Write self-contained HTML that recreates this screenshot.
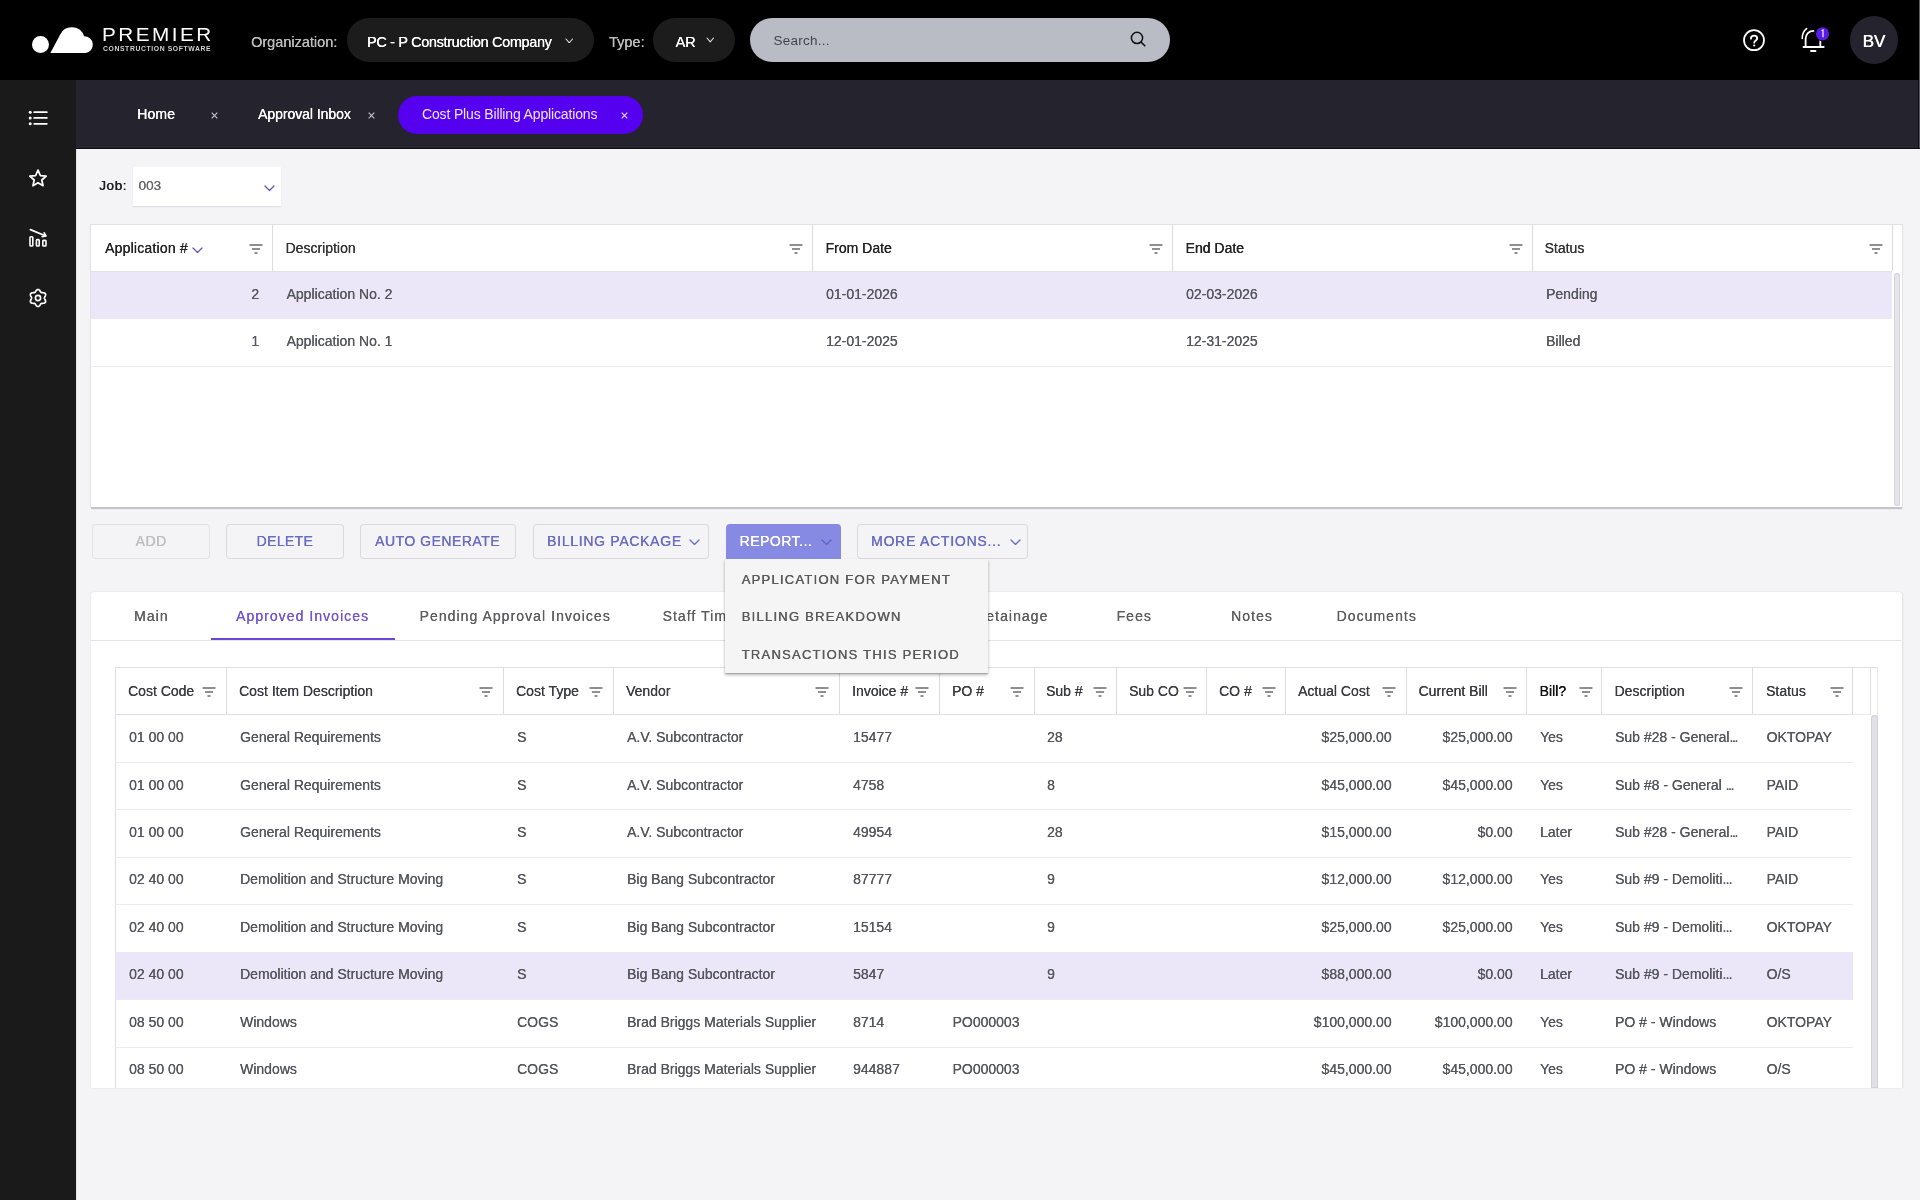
<!DOCTYPE html><html><head><meta charset="utf-8"><style>
html,body{margin:0;padding:0;width:1920px;height:1200px;overflow:hidden;background:#f4f4f7;font-family:"Liberation Sans",sans-serif;}
#wrap{position:absolute;left:0;top:0;width:1920px;height:1200px;will-change:transform;}
.t{position:absolute;white-space:pre;}
.r{position:absolute;}
.d{text-shadow:0.2px 0 0 currentColor;}
</style></head><body><div id="wrap">
<div class="r" style="left:0px;top:0px;width:1920px;height:80px;background:#000;"></div>
<svg class="r" style="left:28px;top:22px" width="70" height="36" viewBox="28 22 70 36"><circle cx="40.5" cy="44.5" r="8.5" fill="#fff"/><path d="M50.4 53.1 L60.2 34.4 A12.9 12.9 0 0 1 84.1 36.2 A8.5 8.5 0 0 1 85.6 53.1 Z" fill="#fff"/></svg>
<div class="t" style="left:101.5px;top:26.06px;font-size:18px;line-height:18px;color:#fff;letter-spacing:2.15px;transform:scaleX(1.15);transform-origin:0 0;">PREMIER</div>
<div class="t" style="left:103px;top:46.14px;font-size:6.8px;line-height:6.8px;color:#d2d2d2;font-weight:700;letter-spacing:0.62px;">CONSTRUCTION SOFTWARE</div>
<div class="t" style="left:251px;top:34.83px;font-size:14.5px;line-height:14.5px;color:#bdbdbd;text-shadow:0.2px 0 0 #bdbdbd;">Organization:</div>
<div class="r" style="left:347px;top:18px;width:247px;height:44px;background:#1c1c1c;border-radius:22px;"></div>
<div class="t" style="left:367px;top:34.83px;font-size:14.5px;line-height:14.5px;color:#fff;letter-spacing:-0.35px;text-shadow:0.15px 0 0 #fff;">PC - P Construction Company</div>
<svg class="r" style="left:565px;top:37.5px" width="8.5" height="5.8" viewBox="0 0 8.5 5.8"><path d="M1 1L4.25 4.8L7.5 1" stroke="#e0e0e0" stroke-width="1.1" fill="none" stroke-linecap="round" stroke-linejoin="round"/></svg>
<div class="t" style="left:609px;top:34.83px;font-size:14.5px;line-height:14.5px;color:#bdbdbd;text-shadow:0.2px 0 0 #bdbdbd;">Type:</div>
<div class="r" style="left:653px;top:18px;width:82px;height:44px;background:#1c1c1c;border-radius:22px;"></div>
<div class="t" style="left:675.5px;top:34.83px;font-size:14.5px;line-height:14.5px;color:#fff;text-shadow:0.15px 0 0 #fff;">AR</div>
<svg class="r" style="left:705.5px;top:37.3px" width="8.5" height="5.8" viewBox="0 0 8.5 5.8"><path d="M1 1L4.25 4.8L7.5 1" stroke="#e0e0e0" stroke-width="1.1" fill="none" stroke-linecap="round" stroke-linejoin="round"/></svg>
<div class="r" style="left:750px;top:18px;width:420px;height:44px;background:#b9bbc5;border-radius:22px;"></div>
<div class="t" style="left:773.5px;top:33.57px;font-size:13.5px;line-height:13.5px;color:#43454f;letter-spacing:0.25px;">Search...</div>
<svg class="r" style="left:1128px;top:29px" width="20" height="20" viewBox="1128 29 20 20"><circle cx="1137" cy="37.9" r="5.6" stroke="#111" stroke-width="1.5" fill="none"/><path d="M1141 42 L1144.8 45.8" stroke="#111" stroke-width="1.6" stroke-linecap="round"/></svg>
<svg class="r" style="left:1740px;top:26px" width="28" height="28" viewBox="1740 26 28 28"><circle cx="1754" cy="40.2" r="10" stroke="#fff" stroke-width="1.8" fill="none"/><path d="M1750.9 38.7 C1750.9 36.7 1752.4 35.7 1754.1 35.7 C1755.9 35.7 1757.2 36.8 1757.2 38.4 C1757.2 40.4 1754.2 40.5 1754.2 42.7" stroke="#fff" stroke-width="1.8" fill="none" stroke-linecap="round"/><circle cx="1754.2" cy="45.5" r="1.1" fill="#fff"/></svg>
<svg class="r" style="left:1796px;top:22px" width="40" height="34" viewBox="1796 22 40 34"><path d="M1805.6 47 L1805.6 39 C1805.6 34 1809 30.9 1813.5 30.9" stroke="#fff" stroke-width="1.8" fill="none" stroke-linecap="round"/><path d="M1820.3 33.5 L1820.3 47" stroke="#fff" stroke-width="1.8" fill="none"/><path d="M1803.5 47 L1823.7 47" stroke="#fff" stroke-width="1.8" stroke-linecap="round"/><path d="M1811 51 L1815.5 51" stroke="#fff" stroke-width="1.8" stroke-linecap="round"/><path d="M1802.2 38.5 C1802.2 33.5 1804 30.5 1806.6 28.6" stroke="#fff" stroke-width="1.6" fill="none" stroke-linecap="round"/><circle cx="1822.5" cy="33.8" r="7.4" fill="#000"/><circle cx="1822.5" cy="33.8" r="6.6" fill="#5a1ae8"/><path d="M1821.6 30.6 L1823 30 L1823 37.3" stroke="#f0e6ff" stroke-width="1.3" fill="none"/></svg>
<div class="r" style="left:1850px;top:16px;width:48px;height:48px;background:#25242e;border-radius:50%;"></div>
<div class="t" style="left:1862.5px;top:32.51px;font-size:17px;line-height:17px;color:#fff;text-shadow:0.4px 0 0 #fff;">BV</div>
<div class="r" style="left:0px;top:80px;width:76px;height:1120px;background:#1a1a1a;"></div>
<svg class="r" style="left:26px;top:106px" width="24" height="24" viewBox="26 106 24 24"><circle cx="30.2" cy="112.2" r="1.5" fill="#fff"/><circle cx="30.2" cy="117.9" r="1.5" fill="#fff"/><circle cx="30.2" cy="123.8" r="1.5" fill="#fff"/><path d="M34.2 112.2H46.8M34.2 117.9H46.8M34.2 123.8H46.8" stroke="#fff" stroke-width="1.8" stroke-linecap="round"/></svg>
<svg class="r" style="left:26px;top:166px" width="24" height="24" viewBox="26 166 24 24"><path d="M38.00 170.15 L40.35 175.51 L46.18 176.09 L41.80 179.99 L43.05 185.71 L38.00 182.75 L32.95 185.71 L34.20 179.99 L29.82 176.09 L35.65 175.51Z" stroke="#fff" stroke-width="1.75" fill="none" stroke-linejoin="round"/></svg>
<svg class="r" style="left:26px;top:226px" width="24" height="24" viewBox="26 226 24 24"><path d="M30.4 229.6 L45.2 235.8" stroke="#fff" stroke-width="1.7" stroke-linecap="round"/><path d="M42.2 236.6 L46 236 L44.2 232.8" stroke="#fff" stroke-width="1.7" fill="none" stroke-linecap="round" stroke-linejoin="round"/><rect x="30" y="236.8" width="2.8" height="9.2" rx="0.8" stroke="#fff" stroke-width="1.6" fill="none"/><rect x="36.4" y="239.6" width="2.8" height="6.4" rx="0.8" stroke="#fff" stroke-width="1.6" fill="none"/><rect x="42.8" y="240.4" width="3.2" height="5.6" rx="0.8" stroke="#fff" stroke-width="1.6" fill="none"/></svg>
<svg class="r" style="left:26px;top:286px" width="24" height="24" viewBox="26 286 24 24"><path d="M38.00 289.50 L38.22 289.52 L38.44 289.56 L38.66 289.64 L38.87 289.75 L39.07 289.88 L39.26 290.03 L39.44 290.21 L39.62 290.40 L39.78 290.60 L39.93 290.80 L40.07 291.01 L40.20 291.22 L40.33 291.43 L40.45 291.62 L40.57 291.80 L40.68 291.97 L40.80 292.12 L40.93 292.25 L41.06 292.36 L41.20 292.46 L41.35 292.53 L41.51 292.59 L41.69 292.63 L41.88 292.66 L42.08 292.68 L42.30 292.69 L42.53 292.70 L42.77 292.70 L43.02 292.72 L43.27 292.73 L43.52 292.76 L43.78 292.80 L44.03 292.85 L44.27 292.92 L44.50 293.01 L44.71 293.12 L44.91 293.25 L45.09 293.40 L45.24 293.57 L45.36 293.75 L45.46 293.95 L45.53 294.16 L45.57 294.39 L45.58 294.62 L45.57 294.86 L45.53 295.11 L45.47 295.35 L45.39 295.60 L45.30 295.84 L45.20 296.07 L45.08 296.30 L44.97 296.52 L44.86 296.73 L44.75 296.93 L44.65 297.12 L44.56 297.31 L44.49 297.49 L44.44 297.66 L44.41 297.83 L44.40 298.00 L44.41 298.17 L44.44 298.34 L44.49 298.51 L44.56 298.69 L44.65 298.88 L44.75 299.07 L44.86 299.27 L44.97 299.48 L45.08 299.70 L45.20 299.93 L45.30 300.16 L45.39 300.40 L45.47 300.65 L45.53 300.89 L45.57 301.14 L45.58 301.38 L45.57 301.61 L45.53 301.84 L45.46 302.05 L45.36 302.25 L45.24 302.43 L45.09 302.60 L44.91 302.75 L44.71 302.88 L44.50 302.99 L44.27 303.08 L44.03 303.15 L43.78 303.20 L43.52 303.24 L43.27 303.27 L43.02 303.28 L42.77 303.30 L42.53 303.30 L42.30 303.31 L42.08 303.32 L41.88 303.34 L41.69 303.37 L41.51 303.41 L41.35 303.47 L41.20 303.54 L41.06 303.64 L40.93 303.75 L40.80 303.88 L40.68 304.03 L40.57 304.20 L40.45 304.38 L40.33 304.57 L40.20 304.78 L40.07 304.99 L39.93 305.20 L39.78 305.40 L39.62 305.60 L39.44 305.79 L39.26 305.97 L39.07 306.12 L38.87 306.25 L38.66 306.36 L38.44 306.44 L38.22 306.48 L38.00 306.50 L37.78 306.48 L37.56 306.44 L37.34 306.36 L37.13 306.25 L36.93 306.12 L36.74 305.97 L36.56 305.79 L36.38 305.60 L36.22 305.40 L36.07 305.20 L35.93 304.99 L35.80 304.78 L35.67 304.57 L35.55 304.38 L35.43 304.20 L35.32 304.03 L35.20 303.88 L35.07 303.75 L34.94 303.64 L34.80 303.54 L34.65 303.47 L34.49 303.41 L34.31 303.37 L34.12 303.34 L33.92 303.32 L33.70 303.31 L33.47 303.30 L33.23 303.30 L32.98 303.28 L32.73 303.27 L32.48 303.24 L32.22 303.20 L31.97 303.15 L31.73 303.08 L31.50 302.99 L31.29 302.88 L31.09 302.75 L30.91 302.60 L30.76 302.43 L30.64 302.25 L30.54 302.05 L30.47 301.84 L30.43 301.61 L30.42 301.38 L30.43 301.14 L30.47 300.89 L30.53 300.65 L30.61 300.40 L30.70 300.16 L30.80 299.93 L30.92 299.70 L31.03 299.48 L31.14 299.27 L31.25 299.07 L31.35 298.88 L31.44 298.69 L31.51 298.51 L31.56 298.34 L31.59 298.17 L31.60 298.00 L31.59 297.83 L31.56 297.66 L31.51 297.49 L31.44 297.31 L31.35 297.12 L31.25 296.93 L31.14 296.73 L31.03 296.52 L30.92 296.30 L30.80 296.07 L30.70 295.84 L30.61 295.60 L30.53 295.35 L30.47 295.11 L30.43 294.86 L30.42 294.62 L30.43 294.39 L30.47 294.16 L30.54 293.95 L30.64 293.75 L30.76 293.57 L30.91 293.40 L31.09 293.25 L31.29 293.12 L31.50 293.01 L31.73 292.92 L31.97 292.85 L32.22 292.80 L32.48 292.76 L32.73 292.73 L32.98 292.72 L33.23 292.70 L33.47 292.70 L33.70 292.69 L33.92 292.68 L34.12 292.66 L34.31 292.63 L34.49 292.59 L34.65 292.53 L34.80 292.46 L34.94 292.36 L35.07 292.25 L35.20 292.12 L35.32 291.97 L35.43 291.80 L35.55 291.62 L35.67 291.43 L35.80 291.22 L35.93 291.01 L36.07 290.80 L36.22 290.60 L36.38 290.40 L36.56 290.21 L36.74 290.03 L36.93 289.88 L37.13 289.75 L37.34 289.64 L37.56 289.56 L37.78 289.52 L38.00 289.50Z" stroke="#fff" stroke-width="1.7" fill="none"/><circle cx="38.0" cy="298.0" r="2.6" stroke="#fff" stroke-width="1.6" fill="none"/></svg>
<div class="r" style="left:76px;top:80px;width:1844px;height:68px;background:#25232e;"></div>
<div class="r" style="left:76px;top:148px;width:1844px;height:1px;background:#0d0c14;"></div>
<div class="t" style="left:137px;top:106.85px;font-size:14px;line-height:14px;color:#fff;letter-spacing:0.15px;text-shadow:0.4px 0 0 #fff;">Home</div>
<svg class="r" style="left:210.5px;top:111.5px" width="7" height="7" viewBox="0 0 7 7"><path d="M0.7 0.7L6.3 6.3M6.3 0.7L0.7 6.3" stroke="#c8c8cf" stroke-width="1.1"/></svg>
<div class="t" style="left:258px;top:106.85px;font-size:14px;line-height:14px;color:#fff;letter-spacing:-0.05px;text-shadow:0.3px 0 0 #fff;">Approval Inbox</div>
<svg class="r" style="left:367.5px;top:111.5px" width="7" height="7" viewBox="0 0 7 7"><path d="M0.7 0.7L6.3 6.3M6.3 0.7L0.7 6.3" stroke="#c8c8cf" stroke-width="1.1"/></svg>
<div class="r" style="left:398px;top:96px;width:245px;height:38px;background:#5500ee;border-radius:19px;"></div>
<div class="t" style="left:422px;top:106.55px;font-size:14px;line-height:14px;color:#ece6ff;letter-spacing:-0.15px;">Cost Plus Billing Applications</div>
<svg class="r" style="left:621px;top:111.5px" width="7" height="7" viewBox="0 0 7 7"><path d="M0.7 0.7L6.3 6.3M6.3 0.7L0.7 6.3" stroke="#e8e0ff" stroke-width="1.1"/></svg>
<div class="r" style="left:76px;top:149px;width:1844px;height:1051px;background:#f4f4f7;"></div>
<div class="r" style="left:1919px;top:0px;width:1px;height:148px;background:#5c5c64;"></div>
<div class="r" style="left:1918px;top:80px;width:1px;height:68px;background:#0d0c14;"></div>
<div class="r" style="left:76px;top:149px;width:1px;height:1051px;background:#e4e4e8;"></div>
<div class="t" style="left:99px;top:178.87px;font-size:13.5px;line-height:13.5px;color:#222;letter-spacing:0.6px;text-shadow:0.45px 0 0 #222;">Job:</div>
<div class="r" style="left:133px;top:167px;width:147.5px;height:38.5px;background:#fff;box-shadow:0 1px 1px rgba(120,130,170,0.18);"></div>
<div class="t" style="left:138.5px;top:179.17px;font-size:13.5px;line-height:13.5px;color:#666;text-shadow:0.25px 0 0 #666;">003</div>
<svg class="r" style="left:263.5px;top:185px" width="11" height="6.5" viewBox="0 0 11 6.5"><path d="M1 1L5.5 5.5L10 1" stroke="#5d57c0" stroke-width="1.25" fill="none" stroke-linecap="round" stroke-linejoin="round"/></svg>
<div class="r" style="left:91px;top:225px;width:1811px;height:282px;background:#fff;box-shadow:0 0 0 1px #e2e2e6;"></div>
<div class="r" style="left:91px;top:507px;width:1811px;height:2px;background:#c4c4cb;"></div>
<div class="r" style="left:91px;top:509px;width:1811px;height:1px;background:#ebebef;"></div>
<div class="r" style="left:91px;top:271px;width:1801px;height:1px;background:#e2e2e4;"></div>
<div class="r" style="left:91px;top:272px;width:1801px;height:47px;background:#ebe7f9;"></div>
<div class="r" style="left:91px;top:366px;width:1801px;height:1px;background:#ececee;"></div>
<div class="r" style="left:272.0px;top:225px;width:1px;height:46px;background:#dcdcdf;"></div>
<div class="r" style="left:811.5px;top:225px;width:1px;height:46px;background:#dcdcdf;"></div>
<div class="r" style="left:1171.5px;top:225px;width:1px;height:46px;background:#dcdcdf;"></div>
<div class="r" style="left:1531.5px;top:225px;width:1px;height:46px;background:#dcdcdf;"></div>
<div class="r" style="left:1891.5px;top:225px;width:1px;height:46px;background:#dcdcdf;"></div>
<div class="r" style="left:1893.5px;top:272.5px;width:6.5px;height:233px;background:#e4e4ea;border-radius:3px;box-shadow:inset 0 0 0 1px #d4d4da;"></div>
<div class="t" style="left:105px;top:241.15px;font-size:14px;line-height:14px;color:#222;letter-spacing:0.2px;text-shadow:0.2px 0 0 #222;">Application #</div>
<svg class="r" style="left:192px;top:246.5px" width="11" height="6.5" viewBox="0 0 11 6.5"><path d="M1 1L5.5 5.5L10 1" stroke="#5d57c0" stroke-width="1.25" fill="none" stroke-linecap="round" stroke-linejoin="round"/></svg>
<svg class="r" style="left:249px;top:243.5px" width="14" height="10" viewBox="0 0 14 10"><path d="M0.5 1h13M3 5h8M5.5 9h3" stroke="#6b6b6b" stroke-width="1.6" fill="none"/></svg>
<div class="t d" style="left:285.5px;top:241.15px;font-size:14px;line-height:14px;color:#333;">Description</div>
<svg class="r" style="left:789px;top:243.5px" width="14" height="10" viewBox="0 0 14 10"><path d="M0.5 1h13M3 5h8M5.5 9h3" stroke="#6b6b6b" stroke-width="1.6" fill="none"/></svg>
<div class="t" style="left:825.5px;top:241.15px;font-size:14px;line-height:14px;color:#222;text-shadow:0.3px 0 0 #222;">From Date</div>
<svg class="r" style="left:1149px;top:243.5px" width="14" height="10" viewBox="0 0 14 10"><path d="M0.5 1h13M3 5h8M5.5 9h3" stroke="#6b6b6b" stroke-width="1.6" fill="none"/></svg>
<div class="t" style="left:1185.5px;top:241.15px;font-size:14px;line-height:14px;color:#222;text-shadow:0.3px 0 0 #222;">End Date</div>
<svg class="r" style="left:1509px;top:243.5px" width="14" height="10" viewBox="0 0 14 10"><path d="M0.5 1h13M3 5h8M5.5 9h3" stroke="#6b6b6b" stroke-width="1.6" fill="none"/></svg>
<div class="t d" style="left:1544.5px;top:241.15px;font-size:14px;line-height:14px;color:#333;">Status</div>
<svg class="r" style="left:1869px;top:243.5px" width="14" height="10" viewBox="0 0 14 10"><path d="M0.5 1h13M3 5h8M5.5 9h3" stroke="#6b6b6b" stroke-width="1.6" fill="none"/></svg>
<div class="t d" style="right:1661px;top:286.65px;font-size:14px;line-height:14px;color:#55565d;">2</div>
<div class="t d" style="left:286.5px;top:286.65px;font-size:14px;line-height:14px;color:#55565d;">Application No. 2</div>
<div class="t d" style="left:826px;top:286.65px;font-size:14px;line-height:14px;color:#55565d;">01-01-2026</div>
<div class="t d" style="left:1186px;top:286.65px;font-size:14px;line-height:14px;color:#55565d;">02-03-2026</div>
<div class="t d" style="left:1546px;top:286.65px;font-size:14px;line-height:14px;color:#55565d;">Pending</div>
<div class="t d" style="right:1661px;top:334.15px;font-size:14px;line-height:14px;color:#55565d;">1</div>
<div class="t d" style="left:286.5px;top:334.15px;font-size:14px;line-height:14px;color:#55565d;">Application No. 1</div>
<div class="t d" style="left:826px;top:334.15px;font-size:14px;line-height:14px;color:#55565d;">12-01-2025</div>
<div class="t d" style="left:1186px;top:334.15px;font-size:14px;line-height:14px;color:#55565d;">12-31-2025</div>
<div class="t d" style="left:1546px;top:334.15px;font-size:14px;line-height:14px;color:#55565d;">Billed</div>
<div class="r" style="left:92px;top:523.5px;width:118px;height:35px;background:transparent;border-radius:4px;box-shadow:inset 0 0 0 1px #e2e2e6;"></div>
<div class="t" style="left:135.5px;top:534.15px;font-size:14px;line-height:14px;color:#bdbdc2;letter-spacing:0.5px;text-shadow:0.3px 0 0 #bdbdc2;">ADD</div>
<div class="r" style="left:225.5px;top:523.5px;width:118px;height:35px;background:transparent;border-radius:4px;box-shadow:inset 0 0 0 1px #dadade;"></div>
<div class="t" style="left:256.5px;top:534.15px;font-size:14px;line-height:14px;color:#6a6dc2;letter-spacing:0.35px;text-shadow:0.3px 0 0 #6a6dc2;">DELETE</div>
<div class="r" style="left:359.5px;top:523.5px;width:156.5px;height:35px;background:transparent;border-radius:4px;box-shadow:inset 0 0 0 1px #dadade;"></div>
<div class="t" style="left:375px;top:534.15px;font-size:14px;line-height:14px;color:#6a6dc2;letter-spacing:0.5px;text-shadow:0.3px 0 0 #6a6dc2;">AUTO GENERATE</div>
<div class="r" style="left:533px;top:523.5px;width:175.5px;height:35px;background:transparent;border-radius:4px;box-shadow:inset 0 0 0 1px #dadade;"></div>
<div class="t" style="left:547px;top:534.15px;font-size:14px;line-height:14px;color:#6a6dc2;letter-spacing:0.7px;text-shadow:0.3px 0 0 #6a6dc2;">BILLING PACKAGE</div>
<svg class="r" style="left:689px;top:538.5px" width="11" height="6.5" viewBox="0 0 11 6.5"><path d="M1 1L5.5 5.5L10 1" stroke="#6a6dc2" stroke-width="1.4" fill="none" stroke-linecap="round" stroke-linejoin="round"/></svg>
<div class="r" style="left:725.5px;top:523.5px;width:115px;height:35px;background:#868ae2;border-radius:4px 4px 0 0;"></div>
<div class="t" style="left:739.5px;top:534.15px;font-size:14px;line-height:14px;color:#ffffff;letter-spacing:0.5px;text-shadow:0.3px 0 0 #ffffff;">REPORT...</div>
<svg class="r" style="left:820.5px;top:538.5px" width="11" height="6.5" viewBox="0 0 11 6.5"><path d="M1 1L5.5 5.5L10 1" stroke="#6461c8" stroke-width="1.4" fill="none" stroke-linecap="round" stroke-linejoin="round"/></svg>
<div class="r" style="left:857px;top:523.5px;width:171px;height:35px;background:transparent;border-radius:4px;box-shadow:inset 0 0 0 1px #dadade;"></div>
<div class="t" style="left:871px;top:534.15px;font-size:14px;line-height:14px;color:#6a6dc2;letter-spacing:0.75px;text-shadow:0.3px 0 0 #6a6dc2;">MORE ACTIONS...</div>
<svg class="r" style="left:1009.5px;top:538.5px" width="11" height="6.5" viewBox="0 0 11 6.5"><path d="M1 1L5.5 5.5L10 1" stroke="#6a6dc2" stroke-width="1.4" fill="none" stroke-linecap="round" stroke-linejoin="round"/></svg>
<div class="r" style="left:91px;top:592px;width:1811px;height:496px;background:#fff;border-radius:3px 3px 0 0;box-shadow:0 0 2px 0 rgba(0,0,0,0.10), 1px 0 1px rgba(0,0,0,0.06);"></div>
<div class="r" style="left:91px;top:640px;width:1810px;height:1px;background:#e4e4e8;"></div>
<div class="r" style="left:211px;top:637.5px;width:184px;height:2.5px;background:#6a46d2;"></div>
<div class="t d" style="left:134px;top:609.05px;font-size:14px;line-height:14px;color:#5d5d5f;letter-spacing:1.05px;">Main</div>
<div class="t d" style="left:236px;top:609.05px;font-size:14px;line-height:14px;color:#7256cf;letter-spacing:1.05px;">Approved Invoices</div>
<div class="t d" style="left:419.5px;top:609.05px;font-size:14px;line-height:14px;color:#5d5d5f;letter-spacing:1.05px;">Pending Approval Invoices</div>
<div class="t d" style="left:662.5px;top:609.05px;font-size:14px;line-height:14px;color:#5d5d5f;letter-spacing:1.05px;">Staff Time and Equipment</div>
<div class="t d" style="left:975px;top:609.05px;font-size:14px;line-height:14px;color:#5d5d5f;letter-spacing:1.05px;">Retainage</div>
<div class="t d" style="left:1116.5px;top:609.05px;font-size:14px;line-height:14px;color:#5d5d5f;letter-spacing:1.05px;">Fees</div>
<div class="t d" style="left:1231px;top:609.05px;font-size:14px;line-height:14px;color:#5d5d5f;letter-spacing:1.05px;">Notes</div>
<div class="t d" style="left:1336.5px;top:609.05px;font-size:14px;line-height:14px;color:#5d5d5f;letter-spacing:1.05px;">Documents</div>
<div class="r" style="left:115px;top:667px;width:1763px;height:421px;background:#fff;box-shadow:inset 1px 0 0 #dcdbea, inset -1px 0 0 #e8e8ec, inset 0 1px 0 #dedee4;"></div>
<div class="r" style="left:115px;top:714px;width:1738px;height:1px;background:#e0e0e4;"></div>
<div class="r" style="left:1852.5px;top:714px;width:18px;height:1px;background:#e8e8ec;"></div>
<div class="r" style="left:225.5px;top:668px;width:1px;height:46px;background:#dcdcdf;"></div>
<div class="r" style="left:502.5px;top:668px;width:1px;height:46px;background:#dcdcdf;"></div>
<div class="r" style="left:612.5px;top:668px;width:1px;height:46px;background:#dcdcdf;"></div>
<div class="r" style="left:838.5px;top:668px;width:1px;height:46px;background:#dcdcdf;"></div>
<div class="r" style="left:938.5px;top:668px;width:1px;height:46px;background:#dcdcdf;"></div>
<div class="r" style="left:1033.5px;top:668px;width:1px;height:46px;background:#dcdcdf;"></div>
<div class="r" style="left:1115.5px;top:668px;width:1px;height:46px;background:#dcdcdf;"></div>
<div class="r" style="left:1205.5px;top:668px;width:1px;height:46px;background:#dcdcdf;"></div>
<div class="r" style="left:1284.5px;top:668px;width:1px;height:46px;background:#dcdcdf;"></div>
<div class="r" style="left:1405.5px;top:668px;width:1px;height:46px;background:#dcdcdf;"></div>
<div class="r" style="left:1526.0px;top:668px;width:1px;height:46px;background:#dcdcdf;"></div>
<div class="r" style="left:1601.0px;top:668px;width:1px;height:46px;background:#dcdcdf;"></div>
<div class="r" style="left:1752.0px;top:668px;width:1px;height:46px;background:#dcdcdf;"></div>
<div class="r" style="left:1852.0px;top:668px;width:1px;height:46px;background:#dcdcdf;"></div>
<div class="r" style="left:1870.0px;top:668px;width:1px;height:46px;background:#dcdcdf;"></div>
<div class="r" style="left:115px;top:761.5px;width:1738px;height:1px;background:#ecebf2;"></div>
<div class="r" style="left:115px;top:809.0px;width:1738px;height:1px;background:#ecebf2;"></div>
<div class="r" style="left:115px;top:856.5px;width:1738px;height:1px;background:#ecebf2;"></div>
<div class="r" style="left:115px;top:904.0px;width:1738px;height:1px;background:#ecebf2;"></div>
<div class="r" style="left:115px;top:951.5px;width:1738px;height:1px;background:#ecebf2;"></div>
<div class="r" style="left:115px;top:999.0px;width:1738px;height:1px;background:#ecebf2;"></div>
<div class="r" style="left:115px;top:1046.5px;width:1738px;height:1px;background:#ecebf2;"></div>
<div class="r" style="left:115px;top:952.0px;width:1738px;height:47px;background:#ebe7f9;"></div>
<div class="r" style="left:1870.5px;top:715px;width:7.5px;height:373px;background:#e0e0e6;border-radius:4px 4px 0 0;box-shadow:inset 0 0 0 1px #d2d2d8;"></div>
<div class="t d" style="left:128px;top:684.35px;font-size:14px;line-height:14px;color:#3b3b42;">Cost Code</div>
<svg class="r" style="left:202px;top:686.5px" width="14" height="10" viewBox="0 0 14 10"><path d="M0.5 1h13M3 5h8M5.5 9h3" stroke="#6b6b6b" stroke-width="1.6" fill="none"/></svg>
<div class="t d" style="left:239px;top:684.35px;font-size:14px;line-height:14px;color:#3b3b42;">Cost Item Description</div>
<svg class="r" style="left:479px;top:686.5px" width="14" height="10" viewBox="0 0 14 10"><path d="M0.5 1h13M3 5h8M5.5 9h3" stroke="#6b6b6b" stroke-width="1.6" fill="none"/></svg>
<div class="t d" style="left:516px;top:684.35px;font-size:14px;line-height:14px;color:#3b3b42;">Cost Type</div>
<svg class="r" style="left:589px;top:686.5px" width="14" height="10" viewBox="0 0 14 10"><path d="M0.5 1h13M3 5h8M5.5 9h3" stroke="#6b6b6b" stroke-width="1.6" fill="none"/></svg>
<div class="t d" style="left:626px;top:684.35px;font-size:14px;line-height:14px;color:#3b3b42;">Vendor</div>
<svg class="r" style="left:815px;top:686.5px" width="14" height="10" viewBox="0 0 14 10"><path d="M0.5 1h13M3 5h8M5.5 9h3" stroke="#6b6b6b" stroke-width="1.6" fill="none"/></svg>
<div class="t d" style="left:852px;top:684.35px;font-size:14px;line-height:14px;color:#3b3b42;">Invoice #</div>
<svg class="r" style="left:915px;top:686.5px" width="14" height="10" viewBox="0 0 14 10"><path d="M0.5 1h13M3 5h8M5.5 9h3" stroke="#6b6b6b" stroke-width="1.6" fill="none"/></svg>
<div class="t d" style="left:952px;top:684.35px;font-size:14px;line-height:14px;color:#3b3b42;">PO #</div>
<svg class="r" style="left:1010px;top:686.5px" width="14" height="10" viewBox="0 0 14 10"><path d="M0.5 1h13M3 5h8M5.5 9h3" stroke="#6b6b6b" stroke-width="1.6" fill="none"/></svg>
<div class="t d" style="left:1046px;top:684.35px;font-size:14px;line-height:14px;color:#3b3b42;">Sub #</div>
<svg class="r" style="left:1093px;top:686.5px" width="14" height="10" viewBox="0 0 14 10"><path d="M0.5 1h13M3 5h8M5.5 9h3" stroke="#6b6b6b" stroke-width="1.6" fill="none"/></svg>
<div class="t d" style="left:1129px;top:684.35px;font-size:14px;line-height:14px;color:#3b3b42;">Sub CO</div>
<svg class="r" style="left:1183px;top:686.5px" width="14" height="10" viewBox="0 0 14 10"><path d="M0.5 1h13M3 5h8M5.5 9h3" stroke="#6b6b6b" stroke-width="1.6" fill="none"/></svg>
<div class="t d" style="left:1219px;top:684.35px;font-size:14px;line-height:14px;color:#3b3b42;">CO #</div>
<svg class="r" style="left:1262px;top:686.5px" width="14" height="10" viewBox="0 0 14 10"><path d="M0.5 1h13M3 5h8M5.5 9h3" stroke="#6b6b6b" stroke-width="1.6" fill="none"/></svg>
<div class="t d" style="left:1298px;top:684.35px;font-size:14px;line-height:14px;color:#3b3b42;">Actual Cost</div>
<svg class="r" style="left:1382px;top:686.5px" width="14" height="10" viewBox="0 0 14 10"><path d="M0.5 1h13M3 5h8M5.5 9h3" stroke="#6b6b6b" stroke-width="1.6" fill="none"/></svg>
<div class="t d" style="left:1418.5px;top:684.35px;font-size:14px;line-height:14px;color:#3b3b42;">Current Bill</div>
<svg class="r" style="left:1503px;top:686.5px" width="14" height="10" viewBox="0 0 14 10"><path d="M0.5 1h13M3 5h8M5.5 9h3" stroke="#6b6b6b" stroke-width="1.6" fill="none"/></svg>
<div class="t" style="left:1539.5px;top:684.35px;font-size:14px;line-height:14px;color:#111;text-shadow:0.35px 0 0 #111;">Bill?</div>
<svg class="r" style="left:1579px;top:686.5px" width="14" height="10" viewBox="0 0 14 10"><path d="M0.5 1h13M3 5h8M5.5 9h3" stroke="#6b6b6b" stroke-width="1.6" fill="none"/></svg>
<div class="t d" style="left:1614.5px;top:684.35px;font-size:14px;line-height:14px;color:#3b3b42;">Description</div>
<svg class="r" style="left:1729px;top:686.5px" width="14" height="10" viewBox="0 0 14 10"><path d="M0.5 1h13M3 5h8M5.5 9h3" stroke="#6b6b6b" stroke-width="1.6" fill="none"/></svg>
<div class="t d" style="left:1766px;top:684.35px;font-size:14px;line-height:14px;color:#3b3b42;">Status</div>
<svg class="r" style="left:1830px;top:686.5px" width="14" height="10" viewBox="0 0 14 10"><path d="M0.5 1h13M3 5h8M5.5 9h3" stroke="#6b6b6b" stroke-width="1.6" fill="none"/></svg>
<div class="t d" style="left:129px;top:730.15px;font-size:14px;line-height:14px;color:#55565d;">01 00 00</div>
<div class="t d" style="left:240px;top:730.15px;font-size:14px;line-height:14px;color:#55565d;">General Requirements</div>
<div class="t d" style="left:517px;top:730.15px;font-size:14px;line-height:14px;color:#55565d;">S</div>
<div class="t d" style="left:627px;top:730.15px;font-size:14px;line-height:14px;color:#55565d;">A.V. Subcontractor</div>
<div class="t d" style="left:853px;top:730.15px;font-size:14px;line-height:14px;color:#55565d;">15477</div>
<div class="t d" style="left:1047px;top:730.15px;font-size:14px;line-height:14px;color:#55565d;">28</div>
<div class="t d" style="right:528.5px;top:730.15px;font-size:14px;line-height:14px;color:#55565d;">$25,000.00</div>
<div class="t d" style="right:407.5px;top:730.15px;font-size:14px;line-height:14px;color:#55565d;">$25,000.00</div>
<div class="t d" style="left:1540px;top:730.15px;font-size:14px;line-height:14px;color:#55565d;">Yes</div>
<div class="t d" style="left:1615px;top:730.15px;font-size:14px;line-height:14px;color:#55565d;">Sub #28 - General<span style="letter-spacing:-1.4px">...</span></div>
<div class="t d" style="left:1766.5px;top:730.15px;font-size:14px;line-height:14px;color:#55565d;">OKTOPAY</div>
<div class="t d" style="left:129px;top:777.55px;font-size:14px;line-height:14px;color:#55565d;">01 00 00</div>
<div class="t d" style="left:240px;top:777.55px;font-size:14px;line-height:14px;color:#55565d;">General Requirements</div>
<div class="t d" style="left:517px;top:777.55px;font-size:14px;line-height:14px;color:#55565d;">S</div>
<div class="t d" style="left:627px;top:777.55px;font-size:14px;line-height:14px;color:#55565d;">A.V. Subcontractor</div>
<div class="t d" style="left:853px;top:777.55px;font-size:14px;line-height:14px;color:#55565d;">4758</div>
<div class="t d" style="left:1047px;top:777.55px;font-size:14px;line-height:14px;color:#55565d;">8</div>
<div class="t d" style="right:528.5px;top:777.55px;font-size:14px;line-height:14px;color:#55565d;">$45,000.00</div>
<div class="t d" style="right:407.5px;top:777.55px;font-size:14px;line-height:14px;color:#55565d;">$45,000.00</div>
<div class="t d" style="left:1540px;top:777.55px;font-size:14px;line-height:14px;color:#55565d;">Yes</div>
<div class="t d" style="left:1615px;top:777.55px;font-size:14px;line-height:14px;color:#55565d;">Sub #8 - General <span style="letter-spacing:-1.4px">...</span></div>
<div class="t d" style="left:1766.5px;top:777.55px;font-size:14px;line-height:14px;color:#55565d;">PAID</div>
<div class="t d" style="left:129px;top:824.95px;font-size:14px;line-height:14px;color:#55565d;">01 00 00</div>
<div class="t d" style="left:240px;top:824.95px;font-size:14px;line-height:14px;color:#55565d;">General Requirements</div>
<div class="t d" style="left:517px;top:824.95px;font-size:14px;line-height:14px;color:#55565d;">S</div>
<div class="t d" style="left:627px;top:824.95px;font-size:14px;line-height:14px;color:#55565d;">A.V. Subcontractor</div>
<div class="t d" style="left:853px;top:824.95px;font-size:14px;line-height:14px;color:#55565d;">49954</div>
<div class="t d" style="left:1047px;top:824.95px;font-size:14px;line-height:14px;color:#55565d;">28</div>
<div class="t d" style="right:528.5px;top:824.95px;font-size:14px;line-height:14px;color:#55565d;">$15,000.00</div>
<div class="t d" style="right:407.5px;top:824.95px;font-size:14px;line-height:14px;color:#55565d;">$0.00</div>
<div class="t d" style="left:1540px;top:824.95px;font-size:14px;line-height:14px;color:#55565d;">Later</div>
<div class="t d" style="left:1615px;top:824.95px;font-size:14px;line-height:14px;color:#55565d;">Sub #28 - General<span style="letter-spacing:-1.4px">...</span></div>
<div class="t d" style="left:1766.5px;top:824.95px;font-size:14px;line-height:14px;color:#55565d;">PAID</div>
<div class="t d" style="left:129px;top:872.35px;font-size:14px;line-height:14px;color:#55565d;">02 40 00</div>
<div class="t d" style="left:240px;top:872.35px;font-size:14px;line-height:14px;color:#55565d;">Demolition and Structure Moving</div>
<div class="t d" style="left:517px;top:872.35px;font-size:14px;line-height:14px;color:#55565d;">S</div>
<div class="t d" style="left:627px;top:872.35px;font-size:14px;line-height:14px;color:#55565d;">Big Bang Subcontractor</div>
<div class="t d" style="left:853px;top:872.35px;font-size:14px;line-height:14px;color:#55565d;">87777</div>
<div class="t d" style="left:1047px;top:872.35px;font-size:14px;line-height:14px;color:#55565d;">9</div>
<div class="t d" style="right:528.5px;top:872.35px;font-size:14px;line-height:14px;color:#55565d;">$12,000.00</div>
<div class="t d" style="right:407.5px;top:872.35px;font-size:14px;line-height:14px;color:#55565d;">$12,000.00</div>
<div class="t d" style="left:1540px;top:872.35px;font-size:14px;line-height:14px;color:#55565d;">Yes</div>
<div class="t d" style="left:1615px;top:872.35px;font-size:14px;line-height:14px;color:#55565d;">Sub #9 - Demoliti<span style="letter-spacing:-0.8px">...</span></div>
<div class="t d" style="left:1766.5px;top:872.35px;font-size:14px;line-height:14px;color:#55565d;">PAID</div>
<div class="t d" style="left:129px;top:919.75px;font-size:14px;line-height:14px;color:#55565d;">02 40 00</div>
<div class="t d" style="left:240px;top:919.75px;font-size:14px;line-height:14px;color:#55565d;">Demolition and Structure Moving</div>
<div class="t d" style="left:517px;top:919.75px;font-size:14px;line-height:14px;color:#55565d;">S</div>
<div class="t d" style="left:627px;top:919.75px;font-size:14px;line-height:14px;color:#55565d;">Big Bang Subcontractor</div>
<div class="t d" style="left:853px;top:919.75px;font-size:14px;line-height:14px;color:#55565d;">15154</div>
<div class="t d" style="left:1047px;top:919.75px;font-size:14px;line-height:14px;color:#55565d;">9</div>
<div class="t d" style="right:528.5px;top:919.75px;font-size:14px;line-height:14px;color:#55565d;">$25,000.00</div>
<div class="t d" style="right:407.5px;top:919.75px;font-size:14px;line-height:14px;color:#55565d;">$25,000.00</div>
<div class="t d" style="left:1540px;top:919.75px;font-size:14px;line-height:14px;color:#55565d;">Yes</div>
<div class="t d" style="left:1615px;top:919.75px;font-size:14px;line-height:14px;color:#55565d;">Sub #9 - Demoliti<span style="letter-spacing:-0.8px">...</span></div>
<div class="t d" style="left:1766.5px;top:919.75px;font-size:14px;line-height:14px;color:#55565d;">OKTOPAY</div>
<div class="t d" style="left:129px;top:967.15px;font-size:14px;line-height:14px;color:#55565d;">02 40 00</div>
<div class="t d" style="left:240px;top:967.15px;font-size:14px;line-height:14px;color:#55565d;">Demolition and Structure Moving</div>
<div class="t d" style="left:517px;top:967.15px;font-size:14px;line-height:14px;color:#55565d;">S</div>
<div class="t d" style="left:627px;top:967.15px;font-size:14px;line-height:14px;color:#55565d;">Big Bang Subcontractor</div>
<div class="t d" style="left:853px;top:967.15px;font-size:14px;line-height:14px;color:#55565d;">5847</div>
<div class="t d" style="left:1047px;top:967.15px;font-size:14px;line-height:14px;color:#55565d;">9</div>
<div class="t d" style="right:528.5px;top:967.15px;font-size:14px;line-height:14px;color:#55565d;">$88,000.00</div>
<div class="t d" style="right:407.5px;top:967.15px;font-size:14px;line-height:14px;color:#55565d;">$0.00</div>
<div class="t d" style="left:1540px;top:967.15px;font-size:14px;line-height:14px;color:#55565d;">Later</div>
<div class="t d" style="left:1615px;top:967.15px;font-size:14px;line-height:14px;color:#55565d;">Sub #9 - Demoliti<span style="letter-spacing:-0.8px">...</span></div>
<div class="t d" style="left:1766.5px;top:967.15px;font-size:14px;line-height:14px;color:#55565d;">O/S</div>
<div class="t d" style="left:129px;top:1014.55px;font-size:14px;line-height:14px;color:#55565d;">08 50 00</div>
<div class="t d" style="left:240px;top:1014.55px;font-size:14px;line-height:14px;color:#55565d;">Windows</div>
<div class="t d" style="left:517px;top:1014.55px;font-size:14px;line-height:14px;color:#55565d;">COGS</div>
<div class="t d" style="left:627px;top:1014.55px;font-size:14px;line-height:14px;color:#55565d;">Brad Briggs Materials Supplier</div>
<div class="t d" style="left:853px;top:1014.55px;font-size:14px;line-height:14px;color:#55565d;">8714</div>
<div class="t d" style="left:952.5px;top:1014.55px;font-size:14px;line-height:14px;color:#55565d;">PO000003</div>
<div class="t d" style="right:528.5px;top:1014.55px;font-size:14px;line-height:14px;color:#55565d;">$100,000.00</div>
<div class="t d" style="right:407.5px;top:1014.55px;font-size:14px;line-height:14px;color:#55565d;">$100,000.00</div>
<div class="t d" style="left:1540px;top:1014.55px;font-size:14px;line-height:14px;color:#55565d;">Yes</div>
<div class="t d" style="left:1615px;top:1014.55px;font-size:14px;line-height:14px;color:#55565d;">PO # - Windows</div>
<div class="t d" style="left:1766.5px;top:1014.55px;font-size:14px;line-height:14px;color:#55565d;">OKTOPAY</div>
<div class="t d" style="left:129px;top:1061.95px;font-size:14px;line-height:14px;color:#55565d;">08 50 00</div>
<div class="t d" style="left:240px;top:1061.95px;font-size:14px;line-height:14px;color:#55565d;">Windows</div>
<div class="t d" style="left:517px;top:1061.95px;font-size:14px;line-height:14px;color:#55565d;">COGS</div>
<div class="t d" style="left:627px;top:1061.95px;font-size:14px;line-height:14px;color:#55565d;">Brad Briggs Materials Supplier</div>
<div class="t d" style="left:853px;top:1061.95px;font-size:14px;line-height:14px;color:#55565d;">944887</div>
<div class="t d" style="left:952.5px;top:1061.95px;font-size:14px;line-height:14px;color:#55565d;">PO000003</div>
<div class="t d" style="right:528.5px;top:1061.95px;font-size:14px;line-height:14px;color:#55565d;">$45,000.00</div>
<div class="t d" style="right:407.5px;top:1061.95px;font-size:14px;line-height:14px;color:#55565d;">$45,000.00</div>
<div class="t d" style="left:1540px;top:1061.95px;font-size:14px;line-height:14px;color:#55565d;">Yes</div>
<div class="t d" style="left:1615px;top:1061.95px;font-size:14px;line-height:14px;color:#55565d;">PO # - Windows</div>
<div class="t d" style="left:1766.5px;top:1061.95px;font-size:14px;line-height:14px;color:#55565d;">O/S</div>
<div class="r" style="left:725px;top:559px;width:262.5px;height:114px;background:#f5f5f5;box-shadow:0 2px 3px rgba(0,0,0,0.28), 0 1px 1px rgba(0,0,0,0.14);"></div>
<div class="t" style="left:741.5px;top:572.60px;font-size:13px;line-height:13px;color:#5a5a5a;letter-spacing:1.25px;text-shadow:0.4px 0 0 #5a5a5a;">APPLICATION FOR PAYMENT</div>
<div class="t" style="left:741.5px;top:610.20px;font-size:13px;line-height:13px;color:#5a5a5a;letter-spacing:1.25px;text-shadow:0.4px 0 0 #5a5a5a;">BILLING BREAKDOWN</div>
<div class="t" style="left:741.5px;top:647.80px;font-size:13px;line-height:13px;color:#5a5a5a;letter-spacing:1.25px;text-shadow:0.4px 0 0 #5a5a5a;">TRANSACTIONS THIS PERIOD</div>
</div></body></html>
